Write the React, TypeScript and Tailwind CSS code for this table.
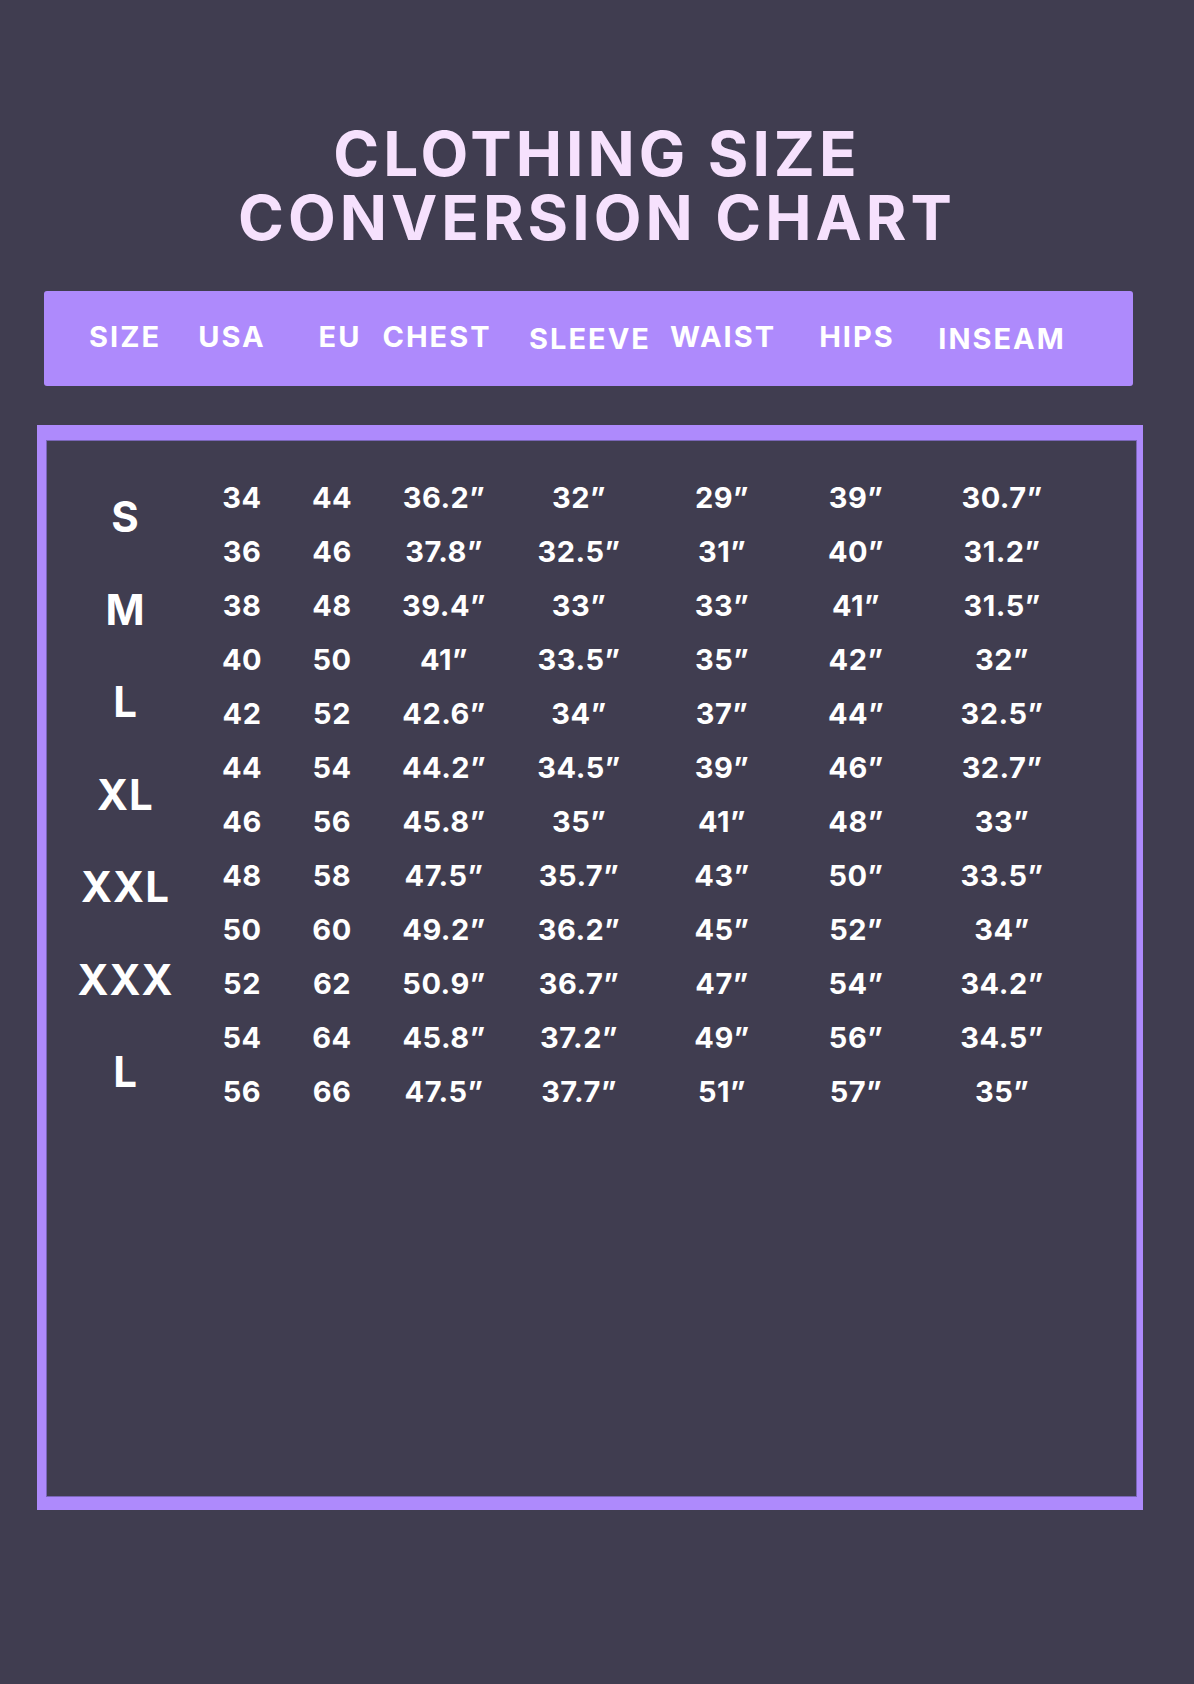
import React from "react";

const rows: string[][] = [
  ["34", "44", "36.2”", "32”", "29”", "39”", "30.7”"],
  ["36", "46", "37.8”", "32.5”", "31”", "40”", "31.2”"],
  ["38", "48", "39.4”", "33”", "33”", "41”", "31.5”"],
  ["40", "50", "41”", "33.5”", "35”", "42”", "32”"],
  ["42", "52", "42.6”", "34”", "37”", "44”", "32.5”"],
  ["44", "54", "44.2”", "34.5”", "39”", "46”", "32.7”"],
  ["46", "56", "45.8”", "35”", "41”", "48”", "33”"],
  ["48", "58", "47.5”", "35.7”", "43”", "50”", "33.5”"],
  ["50", "60", "49.2”", "36.2”", "45”", "52”", "34”"],
  ["52", "62", "50.9”", "36.7”", "47”", "54”", "34.2”"],
  ["54", "64", "45.8”", "37.2”", "49”", "56”", "34.5”"],
  ["56", "66", "47.5”", "37.7”", "51”", "57”", "35”"],
];

const sizes = ["S", "M", "L", "XL", "XXL", "XXX", "L"];

export default function App() {
  return (
    <div className="min-h-[1684px] w-[1194px] bg-[#403d50] font-['Inter','Noto_Sans',sans-serif] overflow-hidden">
      <h1 className="pt-[122px] text-center text-[62px] font-bold tracking-[4px] text-[#f6e1fd]">
        <div className="h-[64px] leading-[64px]">CLOTHING SIZE</div>
        <div className="h-[64px] leading-[64px]">CONVERSION CHART</div>
      </h1>

      <div className="ml-[44px] mt-[41px] flex h-[95px] w-[1089px] items-center rounded-[3px] bg-[#ae8afc] pb-[4px] text-[29px] font-bold tracking-[2px] text-white">
        <div className="ml-[81px] flex w-0 justify-center whitespace-nowrap">SIZE</div>
        <div className="ml-[107px] flex w-0 justify-center whitespace-nowrap">USA</div>
        <div className="ml-[108px] flex w-0 justify-center whitespace-nowrap">EU</div>
        <div className="ml-[97px] flex w-0 justify-center whitespace-nowrap">CHEST</div>
        <div className="ml-[153px] flex w-0 justify-center whitespace-nowrap pt-[5px]">SLEEVE</div>
        <div className="ml-[133px] flex w-0 justify-center whitespace-nowrap">WAIST</div>
        <div className="ml-[134px] flex w-0 justify-center whitespace-nowrap">HIPS</div>
        <div className="ml-[145px] flex w-0 justify-center whitespace-nowrap pt-[5px]">INSEAM</div>
      </div>

      <div className="ml-[37px] mt-[39px] w-[1106px] bg-[#ae8afc] pt-[15px] pl-[9px] pr-[6px] pb-[13px]">
        <div className="h-[1057px] border border-[#7a66b8] bg-[#403d50] pt-[30px] text-white">
          <div className="flex">
            <div className="w-[157px] text-center text-[42px] font-bold leading-[92.57px] tracking-[1px]">
              {sizes.map((s, i) => (
                <div key={i}>{s}</div>
              ))}
            </div>
            <div className="grid grid-cols-[76px_104px_120px_150px_136px_132px_160px] auto-rows-[54px] text-[29px] font-bold leading-[54px] tracking-[0.5px]">
              {rows.map((r, i) =>
                r.map((c, j) => (
                  <div key={`${i}-${j}`} className="flex justify-center whitespace-nowrap">
                    {c}
                  </div>
                ))
              )}
            </div>
          </div>
        </div>
      </div>
    </div>
  );
}
